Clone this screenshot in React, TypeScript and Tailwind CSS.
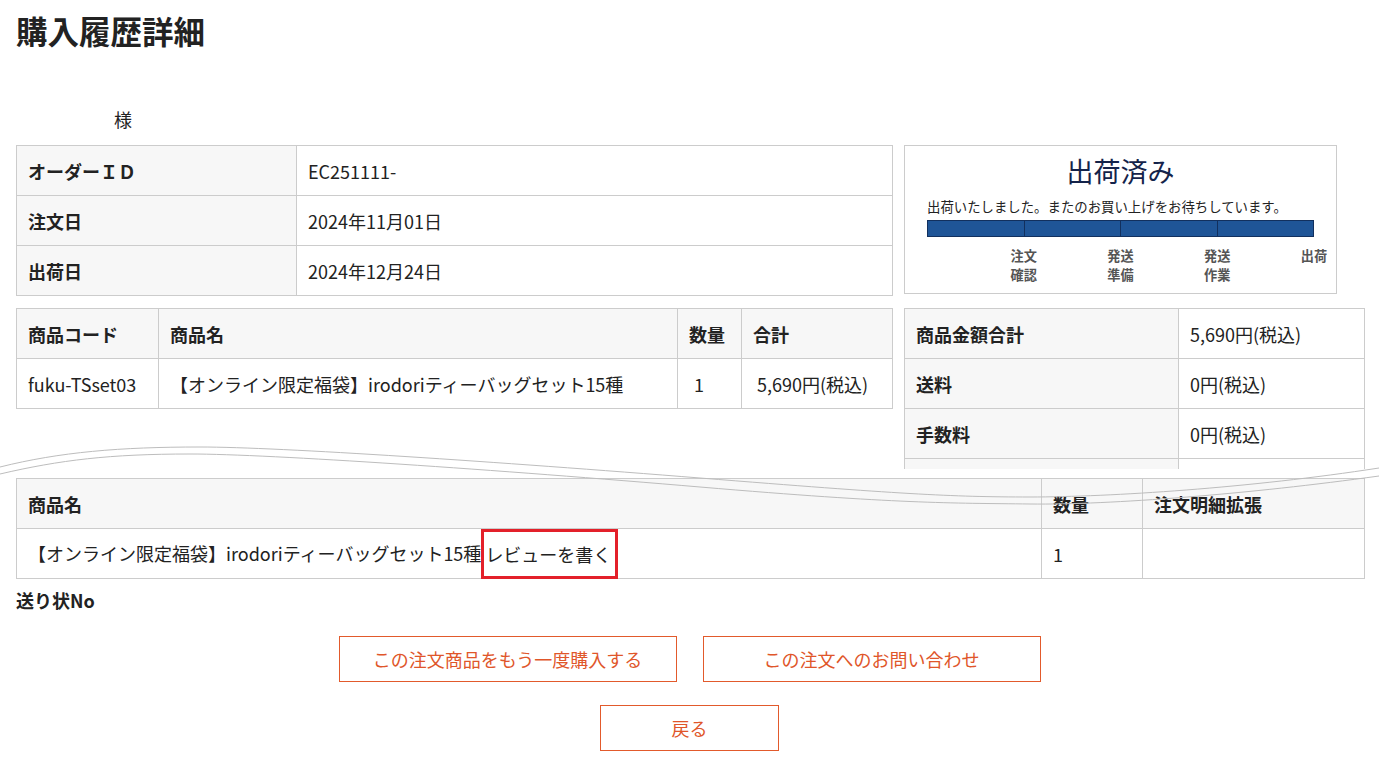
import React from "react";

const font = { fontFamily: '"Noto Sans CJK JP", "Noto Sans", sans-serif' };

function Th({ children }: { children?: React.ReactNode }) {
  return (
    <div className="h-[50px] border-r border-b border-[#cccccc] bg-[#f7f7f7] pl-[11px] flex items-center font-bold text-[#222]">
      {children}
    </div>
  );
}
function Td({ children, className = "" }: { children?: React.ReactNode; className?: string }) {
  return (
    <div className={"h-[50px] border-r border-b border-[#cccccc] bg-white pl-[11px] flex items-center text-[#222] " + className}>
      {children}
    </div>
  );
}

export default function App() {
  return (
    <div className="relative w-full min-h-[769px] bg-white text-[18px] leading-[24px]" style={font}>
      <div className="h-[469px] overflow-hidden pl-4">
        <h1 className="text-[31.5px] leading-[60px] font-bold text-[#222]">購入履歴詳細</h1>
        <div className="mt-[47px] pl-[98px] leading-[24px] text-[#222]">様</div>

        <div className="mt-[14px] flex items-start gap-[11px]">
          <div className="grid grid-cols-[280px_596px] border-l border-t border-[#cccccc] w-[877px] shrink-0">
            <Th>オーダーＩＤ</Th>
            <Td>EC251111-</Td>
            <Th>注文日</Th>
            <Td>2024年11月01日</Td>
            <Th>出荷日</Th>
            <Td>2024年12月24日</Td>
          </div>

          <div className="w-[433px] h-[149px] shrink-0 border border-[#cccccc] pt-[7px] px-[22px]">
            <div className="text-center text-[27px] leading-[36px] text-[#14234a]">出荷済み</div>
            <div className="mt-[8px] text-[13.4px] leading-[18px] text-[#222] whitespace-nowrap">
              出荷いたしました。またのお買い上げをお待ちしています。
            </div>
            <div className="mt-[5px] w-[387px] h-[17px] flex border border-[#12305e] bg-[#1f5597]">
              <div className="flex-1 border-r border-[#12305e]" />
              <div className="flex-1 border-r border-[#12305e]" />
              <div className="flex-1 border-r border-[#12305e]" />
              <div className="flex-1" />
            </div>
            <div className="mt-[9px] w-[387px] flex text-[13.2px] leading-[19px] font-bold text-[#555]">
              {[["注文", "確認"], ["発送", "準備"], ["発送", "作業"], ["出荷", ""]].map((l, i) => (
                <div key={i} className="flex-1 flex justify-end">
                  <div className="translate-x-1/2 text-center">
                    <div>{l[0]}</div>
                    {l[1] && <div>{l[1]}</div>}
                  </div>
                </div>
              ))}
            </div>
          </div>
        </div>

        <div className="mt-[12px] flex items-start gap-[11px]">
          <div className="grid grid-cols-[142px_519px_64px_151px] border-l border-t border-[#cccccc] w-[877px] shrink-0">
            <Th>商品コード</Th>
            <Th>商品名</Th>
            <Th>数量</Th>
            <Th>合計</Th>
            <Td>fuku-TSset03</Td>
            <Td className="whitespace-nowrap">【オンライン限定福袋】irodoriティーバッグセット15種</Td>
            <Td className="pl-[16px]">1</Td>
            <Td className="pl-[15px]">5,690円(税込)</Td>
          </div>

          <div className="grid grid-cols-[274px_186px] border-l border-t border-[#cccccc] w-[461px] shrink-0">
            <Th>商品金額合計</Th>
            <Td>5,690円(税込)</Td>
            <Th>送料</Th>
            <Td>0円(税込)</Td>
            <Th>手数料</Th>
            <Td>0円(税込)</Td>
            <Th></Th>
            <Td></Td>
          </div>
        </div>
      </div>

      <div className="pl-4">
        <div className="mt-[9px] grid grid-cols-[1025px_101px_222px] border-l border-t border-[#cccccc] w-[1349px]">
          <Th>商品名</Th>
          <Th>数量</Th>
          <Th>注文明細拡張</Th>
          <div className="h-[50px] border-r border-b border-[#cccccc] bg-white pl-[11px] flex items-start text-[#222] whitespace-nowrap">
            <span className="leading-[49px]">【オンライン限定福袋】irodoriティーバッグセット15種</span>
            <span className="h-[50px] border-[3px] border-[#e3202a] pl-[1px] pr-[4px] flex items-center">レビューを書く</span>
          </div>
          <Td>1</Td>
          <Td></Td>
        </div>

        <div className="mt-[9px] font-bold text-[#222] leading-[24px]">送り状No</div>

        <div className="mt-[24px] -ml-4 flex justify-center gap-[26px]">
          <button className="w-[338px] h-[46px] border border-[#e25a2c] text-[#e0562a] bg-white flex items-center justify-center">
            この注文商品をもう一度購入する
          </button>
          <button className="w-[338px] h-[46px] border border-[#e25a2c] text-[#e0562a] bg-white flex items-center justify-center">
            この注文へのお問い合わせ
          </button>
        </div>
        <div className="mt-[23px] -ml-4 flex justify-center">
          <button className="w-[179px] h-[46px] border border-[#e25a2c] text-[#e0562a] bg-white flex items-center justify-center">
            戻る
          </button>
        </div>
      </div>

      <svg
        className="absolute left-0 top-[440px] w-full h-[70px] pointer-events-none"
        viewBox="0 440 1379 70"
        preserveAspectRatio="none"
        fill="none"
      >
        <path
          d="M0,467 C60,452 120,447 200,447 S500,462 700,478 S950,497 1030,497 S1250,488 1379,468"
          stroke="#bdbdbd"
          strokeWidth="1"
        />
        <path
          d="M0,474 C60,460 110,454 190,454 S500,470 700,487 S950,503 1030,504 S1250,494 1379,476"
          stroke="#bdbdbd"
          strokeWidth="1"
        />
      </svg>
    </div>
  );
}
